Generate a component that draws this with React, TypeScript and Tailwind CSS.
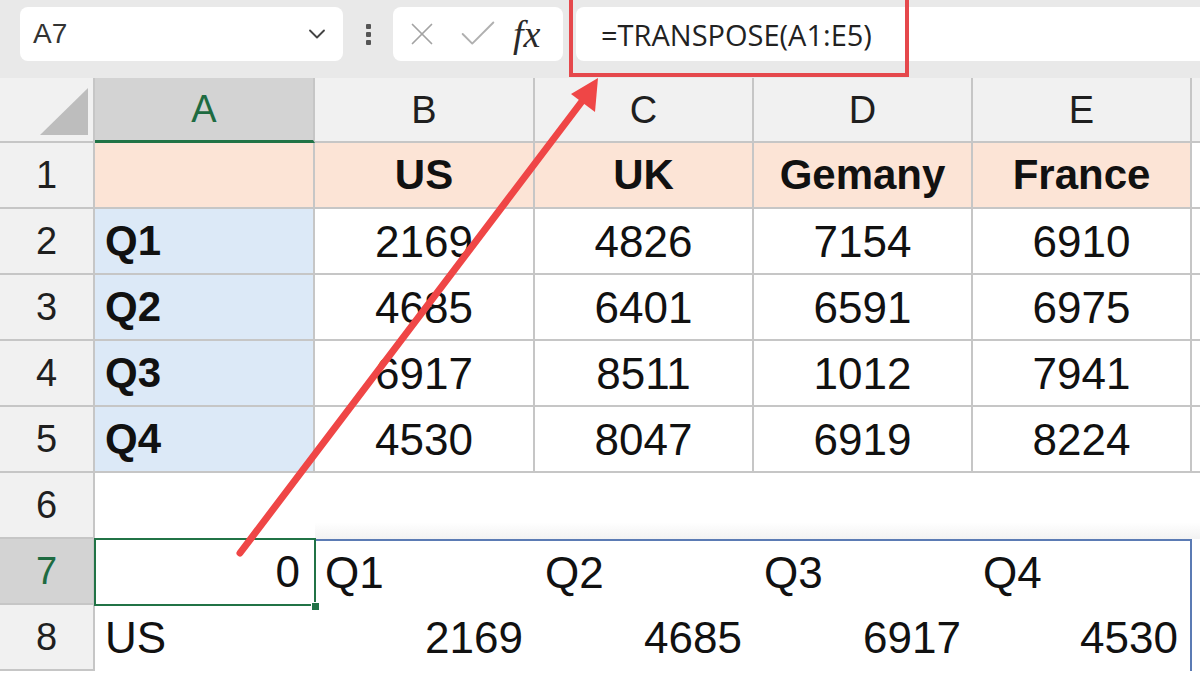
import React from 'react';
import { ChevronDown, X, Check } from 'lucide-react';

// column widths: row header, A..E, then the sliver of F
const colW = [95, 220, 220, 219, 219, 219, 8];
const letters = ['A', 'B', 'C', 'D', 'E'];

const data = [
    { q: 'Q1', v: ['2169', '4826', '7154', '6910'] },
    { q: 'Q2', v: ['4685', '6401', '6591', '6975'] },
    { q: 'Q3', v: ['6917', '8511', '1012', '7941'] },
    { q: 'Q4', v: ['4530', '8047', '6919', '8224'] },
];

const grid = 'border-[#c6c6c6]';

function RowHead({ n, active }: { n: number; active?: boolean }) {
    return (
        <div
            className={`shrink-0 flex items-center justify-center border-r-2 border-b-2 ${grid} text-[38px] leading-none ${active ? 'bg-[#d3d3d3] text-[#1e6b41]' : 'bg-[#f1f1f1] text-[#1f1f1f]'}`}
            style={{ width: colW[0] }}
        >
            {n}
        </div>
    );
}

export default function App() {
    return (
        <div className="relative w-[1200px] h-[675px] overflow-hidden bg-white font-['Liberation_Sans',Arial,sans-serif] text-[#111]">
            {/* Formula bar */}
            <div className="flex items-start h-[78px] pt-[7px] bg-[#e9e9e9]">
                <div className="ml-[20px] w-[323px] h-[54px] bg-white rounded-[8px] flex items-center justify-between pl-[13px] pr-[12px]">
                    <span className="text-[28px] text-[#333] leading-none">A7</span>
                    <ChevronDown className="w-[28px] h-[28px] text-[#444]" strokeWidth={1.6} />
                </div>
                <div className="w-[50px] h-[54px] flex items-center justify-center">
                    <div className="flex flex-col gap-[3px]">
                        <div className="w-[5px] h-[5px] bg-[#555] rounded-[1px]" />
                        <div className="w-[5px] h-[5px] bg-[#555] rounded-[1px]" />
                        <div className="w-[5px] h-[5px] bg-[#555] rounded-[1px]" />
                    </div>
                </div>
                <div className="w-[170px] h-[54px] bg-white rounded-[8px] flex items-center pl-[10px]">
                    <X className="w-[38px] h-[38px] text-[#a3a3a3]" strokeWidth={1.1} />
                    <Check className="w-[46px] h-[46px] ml-[14px] text-[#b0b0b0]" strokeWidth={1} />
                    <span className="ml-[12px] font-['Liberation_Serif',serif] italic text-[38px] leading-none text-[#2a2a2a]">fx</span>
                </div>
                <div className="ml-[13px] flex-1 h-[54px] bg-white rounded-l-[8px] flex items-center pl-[25px]">
                    <span className="font-['Open_Sans',sans-serif] text-[29px] text-[#222] leading-none">=TRANSPOSE(A1:E5)</span>
                </div>
            </div>

            {/* red highlight round the formula */}
            <div className="absolute left-[569px] top-[-4px] w-[340px] h-[81px] border-4 border-[#e5484c]" />

            {/* Column headers */}
            <div className="flex h-[65px]">
                <div className={`shrink-0 relative bg-[#f1f1f1] border-r-2 border-b-2 ${grid}`} style={{ width: colW[0] }}>
                    <svg className="absolute left-0 top-0" width="95" height="65">
                        <polygon points="88,10 88,57 40,57" fill="#bdbdbd" />
                    </svg>
                </div>
                {letters.map((l, i) => (
                    <div
                        key={l}
                        className={`shrink-0 flex items-center justify-center text-[38px] leading-none border-r-2 ${i === 0 ? 'bg-[#d3d3d3] text-[#1e6b41] border-b-[3px] border-b-[#217346] border-r-[#c6c6c6]' : `bg-[#f1f1f1] text-[#1f1f1f] border-b-2 ${grid}`}`}
                        style={{ width: colW[i + 1] }}
                    >
                        {l}
                    </div>
                ))}
                <div className={`flex-1 bg-[#f1f1f1] border-b-2 ${grid}`} />
            </div>

            {/* Row 1 */}
            <div className="flex h-[66px]">
                <RowHead n={1} />
                <div className={`shrink-0 bg-[#fce4d6] border-r-2 border-b-2 ${grid}`} style={{ width: colW[1] }} />
                {['US', 'UK', 'Gemany', 'France'].map((h, i) => (
                    <div
                        key={h}
                        className={`shrink-0 bg-[#fce4d6] flex items-center justify-center font-bold text-[42px] leading-none border-r-2 border-b-2 ${grid}`}
                        style={{ width: colW[i + 2] }}
                    >
                        {h}
                    </div>
                ))}
                <div className={`flex-1 border-b-2 ${grid}`} />
            </div>

            {/* Rows 2-5 */}
            {data.map((r, ri) => (
                <div key={r.q} className="flex h-[66px]">
                    <RowHead n={ri + 2} />
                    <div
                        className={`shrink-0 bg-[#dce9f7] flex items-center pl-[10px] font-bold text-[42px] leading-none border-r-2 border-b-2 ${grid}`}
                        style={{ width: colW[1] }}
                    >
                        {r.q}
                    </div>
                    {r.v.map((v, i) => (
                        <div
                            key={i}
                            className={`shrink-0 flex items-center justify-center pt-[2px] text-[44px] leading-none border-r-2 border-b-2 ${grid}`}
                            style={{ width: colW[i + 2] }}
                        >
                            {v}
                        </div>
                    ))}
                    <div className={`flex-1 border-b-2 ${grid}`} />
                </div>
            ))}

            {/* Row 6 */}
            <div className="flex h-[66px]">
                <RowHead n={6} />
                <div className="shrink-0" style={{ width: colW[1] }} />
                <div className="flex-1 bg-linear-to-b from-white from-75% to-[#f2f2f2]" />
            </div>

            {/* Row 7 - spilled result */}
            <div className="flex h-[66px]">
                <RowHead n={7} active />
                <div className="shrink-0 relative flex items-center justify-end pr-[15px] text-[44px] leading-none" style={{ width: colW[1] }}>
                    0
                    <div className="absolute left-[-1px] top-[-1px] right-[-1px] bottom-[-1px] border-2 border-[#217346]" />
                    <div className="absolute right-[-5px] bottom-[-6px] w-[9px] h-[9px] bg-[#217346] border border-white" />
                </div>
                {['Q1', 'Q2', 'Q3', 'Q4'].map((q, i) => (
                    <div
                        key={q}
                        className={`shrink-0 flex items-center pl-[10px] text-[44px] leading-none border-t-2 border-[#5b7bb4] ${i === 3 ? 'border-r-2' : ''}`}
                        style={{ width: colW[i + 2] }}
                    >
                        {q}
                    </div>
                ))}
            </div>

            {/* Row 8 */}
            <div className="flex h-[66px]">
                <RowHead n={8} />
                <div className="shrink-0 flex items-center pl-[10px] text-[44px] leading-none" style={{ width: colW[1] }}>
                    US
                </div>
                {['2169', '4685', '6917', '4530'].map((v, i) => (
                    <div
                        key={i}
                        className={`shrink-0 flex items-center justify-end pr-[12px] text-[44px] leading-none ${i === 3 ? 'border-r-2 border-[#5b7bb4]' : ''}`}
                        style={{ width: colW[i + 2] }}
                    >
                        {v}
                    </div>
                ))}
            </div>

            {/* Annotation arrow */}
            <svg className="absolute left-0 top-0 pointer-events-none" width="1200" height="675">
                <line x1="240" y1="553" x2="586" y2="96" stroke="#ef4646" strokeWidth="7" strokeLinecap="round" />
                <polygon points="598,78 571,94 595,112" fill="#ef4646" />
            </svg>
        </div>
    );
}
